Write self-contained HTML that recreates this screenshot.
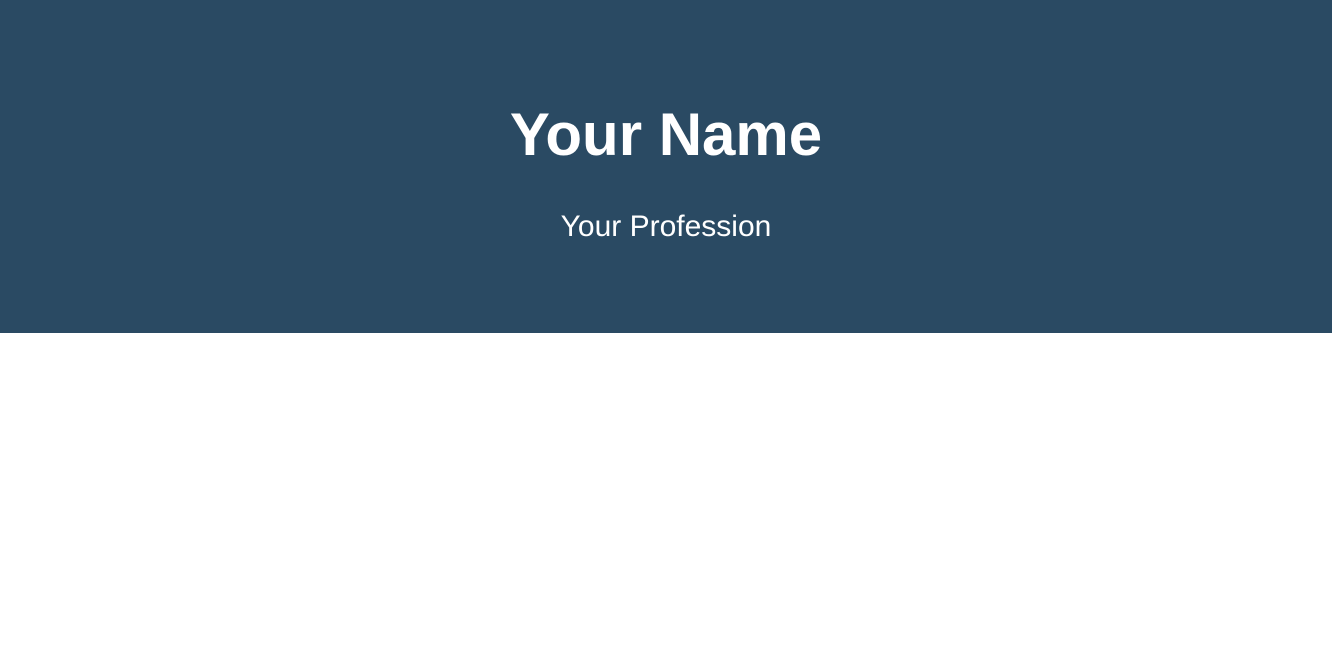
<!DOCTYPE html>
<html><head><meta charset="utf-8"><style>
html,body{margin:0;padding:0;width:1332px;height:654px;background:#fff;overflow:hidden}
header{position:absolute;left:0;top:0;width:1332px;height:333px;background:#2a4a63;color:#fff;font-family:"Liberation Sans",sans-serif;text-align:center}
h1{position:absolute;left:0;right:0;top:101px;margin:0;font-size:60px;line-height:68px;font-weight:bold}
p{position:absolute;left:0;right:0;top:208px;margin:0;font-size:30px;line-height:38px}
</style></head><body>
<header><h1>Your Name</h1><p>Your Profession</p></header>
</body></html>
